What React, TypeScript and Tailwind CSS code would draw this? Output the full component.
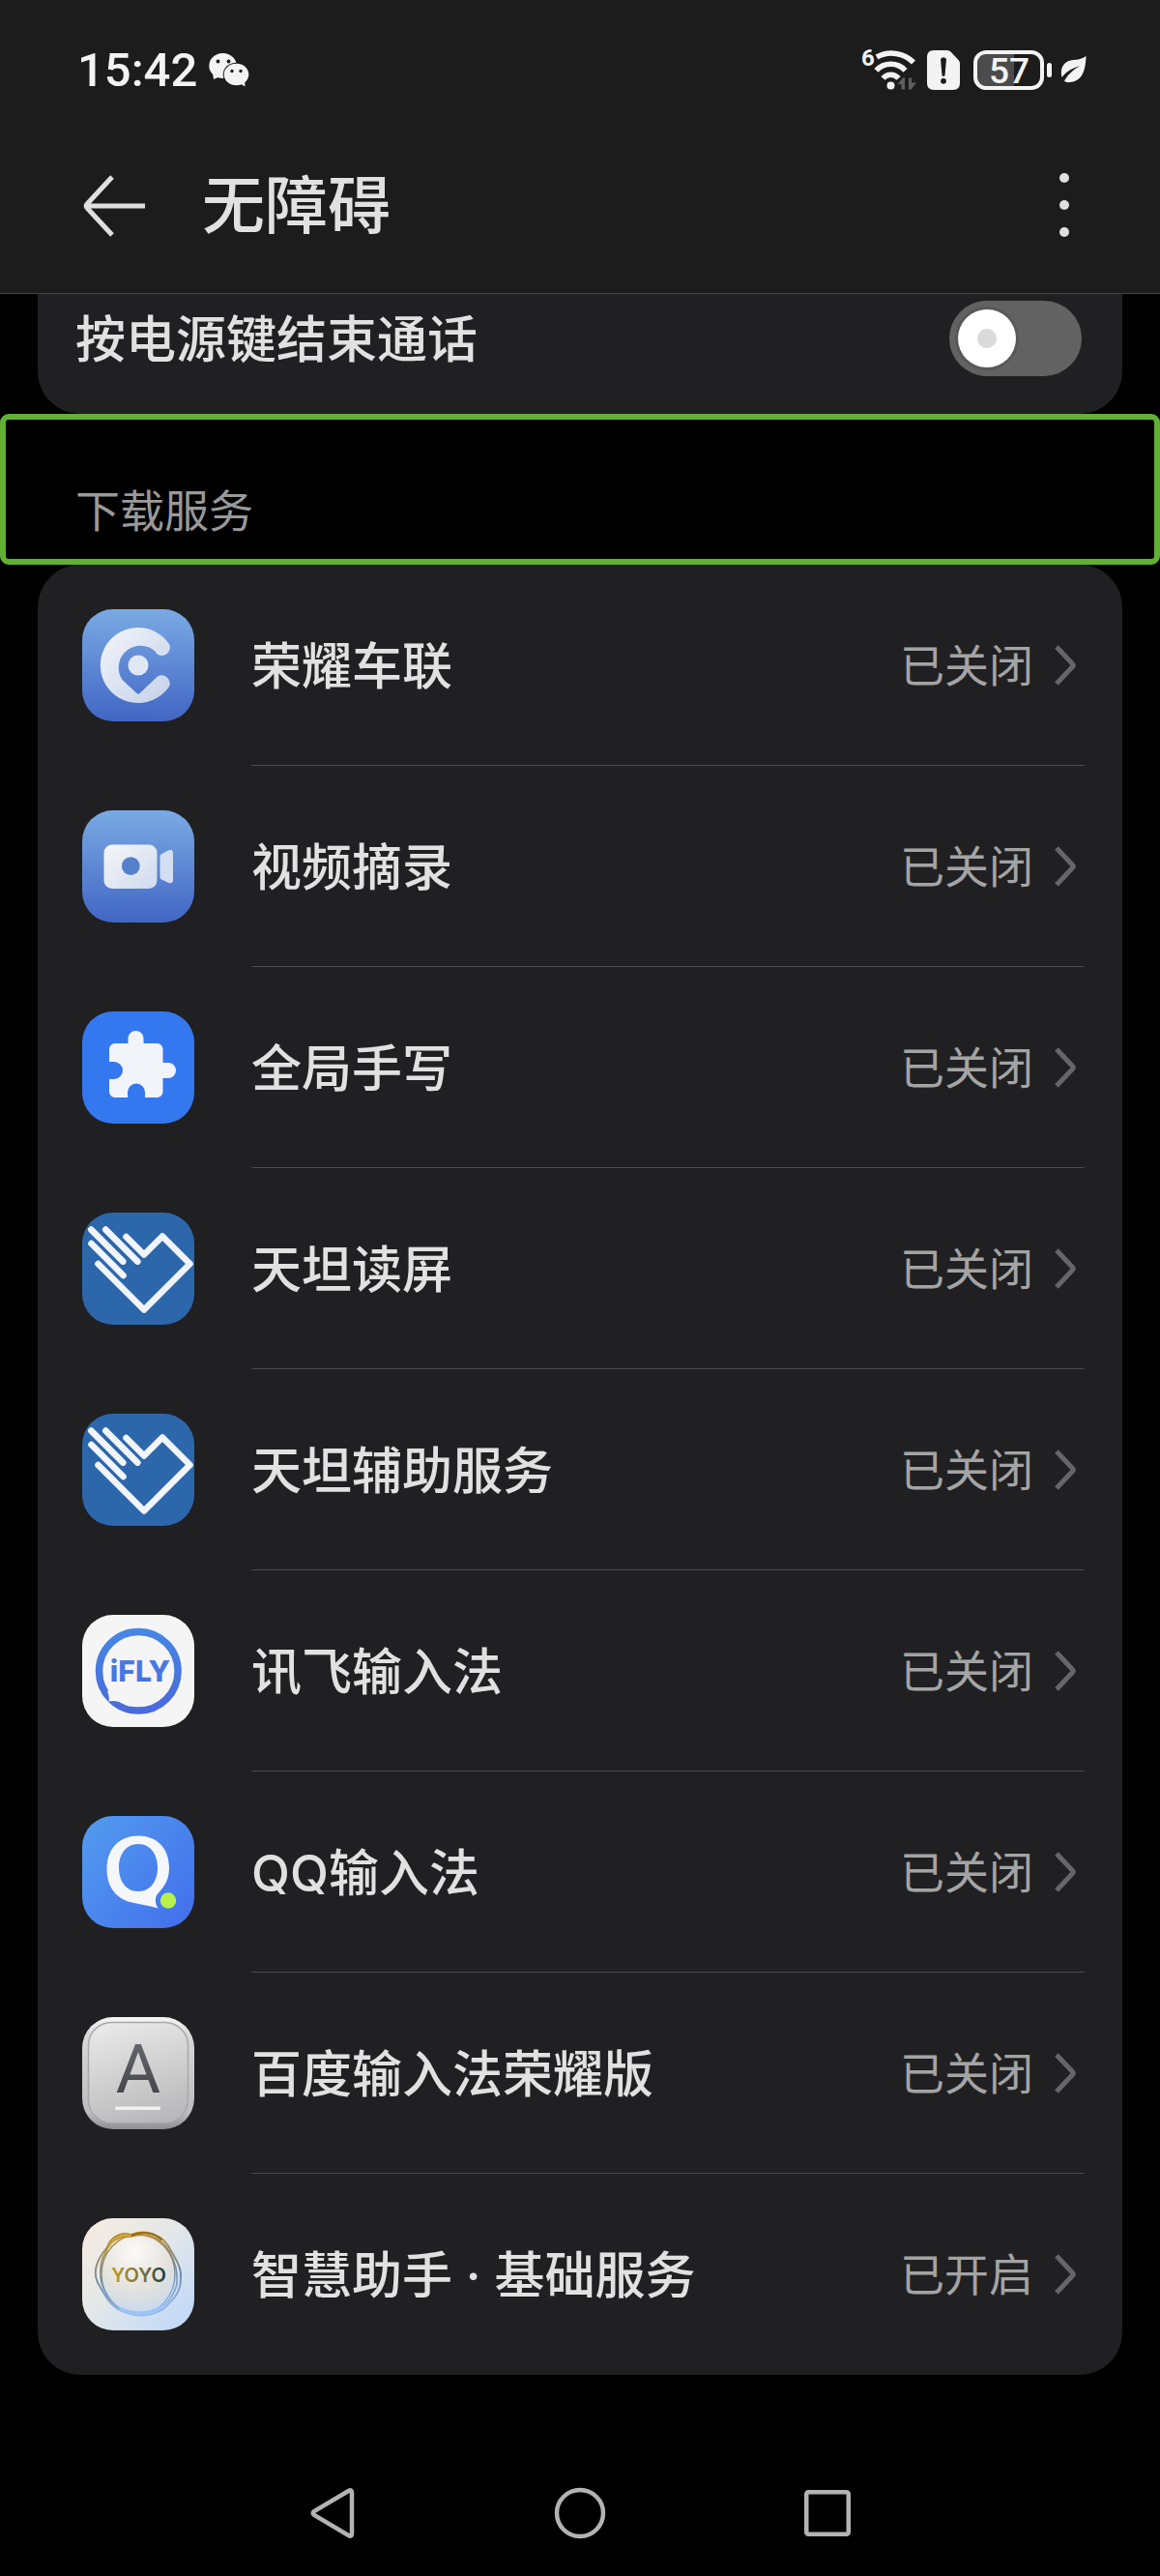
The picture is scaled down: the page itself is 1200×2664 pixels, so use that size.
import * as React from "react";

interface ServiceRowProps {
  name: string;
  status: string;
  Icon: React.ElementType;
  divider?: boolean;
}

const services = [
  { name: "荣耀车联", status: "已关闭", Icon: CarLinkIcon },
  { name: "视频摘录", status: "已关闭", Icon: VideoIcon },
  { name: "全局手写", status: "已关闭", Icon: PuzzleIcon },
  { name: "天\u5766读屏", status: "已关闭", Icon: HandHeartIcon },
  { name: "天\u5766辅助服务", status: "已关闭", Icon: HandHeartIcon },
  { name: "讯飞输入法", status: "已关闭", Icon: IflyIcon },
  { name: "QQ输入法", status: "已关闭", Icon: QqInputIcon },
  { name: "百度输入法荣耀版", status: "已关闭", Icon: BaiduInputIcon },
  { name: "智慧助手 · 基础服务", status: "已开启", Icon: YoyoIcon },
];

function AppIcon({ children }: { children: React.ReactNode }) {
  return (
    <svg
      viewBox="0 0 116 116"
      className="size-[116px] shrink-0 rounded-[32px]"
      aria-hidden="true"
    >
      {children}
    </svg>
  );
}

function CarLinkIcon() {
  return (
    <AppIcon>
      <defs>
        <linearGradient id="car-bg" x1="0" y1="0" x2="0" y2="1">
          <stop offset="0" stopColor="#7aaae4" />
          <stop offset="1" stopColor="#4166c4" />
        </linearGradient>
        <linearGradient id="car-fg" x1="0" y1="0" x2="1" y2="1">
          <stop offset="0" stopColor="#f4f6f9" />
          <stop offset="1" stopColor="#c3d0ea" />
        </linearGradient>
      </defs>
      <rect width="116" height="116" fill="url(#car-bg)" />
      <path
        d="M90 36A39 39 0 1 0 90 80A8.400 8.400 0 0 0 78 69.500L59.500 87Q58 88.500 56.500 87L41.500 73A22.700 22.700 0 0 1 75.500 43.500L77 46A8.400 8.400 0 0 0 90 36Z"
        fill="url(#car-fg)"
      />
      <circle cx="58" cy="58" r="10.500" fill="#e1e8f5" />
    </AppIcon>
  );
}

function VideoIcon() {
  return (
    <AppIcon>
      <defs>
        <linearGradient id="video-bg" x1="0" y1="0" x2="0" y2="1">
          <stop offset="0" stopColor="#7aaae4" />
          <stop offset="1" stopColor="#4166c4" />
        </linearGradient>
        <linearGradient id="video-fg" x1="0" y1="0" x2="1" y2="1">
          <stop offset="0" stopColor="#f5f6f8" />
          <stop offset="1" stopColor="#cfdaee" />
        </linearGradient>
      </defs>
      <rect width="116" height="116" fill="url(#video-bg)" />
      <rect x="22.500" y="35.500" width="55" height="45.500" rx="8.500" fill="url(#video-fg)" />
      <circle cx="50.300" cy="57.700" r="9.400" fill="#5480cc" />
      <path
        d="M80.500 47.500Q80.500 46 82 45.300L89.500 41.300Q94 40 94 44.500V72Q94 76 89.500 75L82 71.500Q80.500 70.500 80.500 69Z"
        fill="#d3dff1"
      />
    </AppIcon>
  );
}

function PuzzleIcon() {
  return (
    <AppIcon>
      <rect width="116" height="116" fill="#3478f0" />
      <path
        d="M34 33H47.500V28a8 8 0 0 1 16 0V33H77.500a6 6 0 0 1 6 6V53H89a8 8 0 0 1 0 16H83.500V83a6 6 0 0 1-6 6H65V83.500a9 9 0 0 0-18 0V89H34a6 6 0 0 1-6-6V70H33a9 9 0 0 0 0-18H28V39a6 6 0 0 1 6-6Z"
        fill="#f1f4f8"
      />
    </AppIcon>
  );
}

function HandHeartIcon() {
  return (
    <AppIcon>
      <rect width="116" height="116" fill="#2c67ac" />
      <path
        d="M45.500 25L64 43.500L83 24.500L111.500 53L64 100.500L16.500 53M9.300 17.600L42.300 50.600M24.300 17.600L57.300 50.600M9.500 32L42.500 65"
        fill="none"
        stroke="#f1f4f8"
        strokeWidth="6.600"
        strokeLinecap="round"
        strokeLinejoin="round"
      />
    </AppIcon>
  );
}

function IflyIcon() {
  return (
    <AppIcon>
      <defs>
        <linearGradient
          id="ifly"
          gradientUnits="userSpaceOnUse"
          x1="58"
          y1="14"
          x2="58"
          y2="102"
        >
          <stop offset="0" stopColor="#4587e4" />
          <stop offset="1" stopColor="#4a69dc" />
        </linearGradient>
      </defs>
      <rect width="116" height="116" fill="#f5f5f5" />
      <circle cx="58.300" cy="58.300" r="40.800" fill="none" stroke="url(#ifly)" strokeWidth="7.500" />
      <path
        d="M29 76L26 79.500Q28.500 84 27.500 89.500Q36 87.500 42 92Q46 94 50 95L54 80Z"
        fill="#f5f5f5"
      />
      <text
        x="60"
        y="69"
        textAnchor="middle"
        fontFamily="Inter"
        fontWeight="800"
        fontSize="30"
        fill="url(#ifly)"
      >
        iFLY
      </text>
    </AppIcon>
  );
}

function QqInputIcon() {
  return (
    <AppIcon>
      <defs>
        <linearGradient id="qq-bg" x1="0" y1="0.100" x2="1" y2="0.900">
          <stop offset="0" stopColor="#529aef" />
          <stop offset="1" stopColor="#4270ec" />
        </linearGradient>
      </defs>
      <rect width="116" height="116" fill="url(#qq-bg)" />
      <path
        fillRule="evenodd"
        d="M58 20.500C78 20.500 90 34 90 54C90 67 84 74 78.500 80C75 84 75 90 78.500 95.500C70 93 62 92 54 90C36 87 25.500 74 25.500 55C25.500 34 38 20.500 58 20.500ZM58 29C45 29 38 40 38 53.500C38 67 45 78 58 78C71 78 78 67 78 53.500C78 40 71 29 58 29Z"
        fill="#f5f6f8"
      />
      <circle cx="89" cy="87.500" r="8.200" fill="#b6f24b" />
    </AppIcon>
  );
}

function BaiduInputIcon() {
  return (
    <AppIcon>
      <defs>
        <linearGradient id="key-edge" x1="0" y1="0" x2="0" y2="1">
          <stop offset="0" stopColor="#f7f7f7" />
          <stop offset="0.150" stopColor="#d8d8d9" />
          <stop offset="0.850" stopColor="#bdbdbf" />
          <stop offset="1" stopColor="#8f8f92" />
        </linearGradient>
        <linearGradient id="key-face" x1="0.300" y1="0" x2="0.600" y2="1">
          <stop offset="0" stopColor="#e8e8e8" />
          <stop offset="1" stopColor="#b9b9bb" />
        </linearGradient>
        <linearGradient
          id="key-letter"
          gradientUnits="userSpaceOnUse"
          x1="0"
          y1="27"
          x2="0"
          y2="78"
        >
          <stop offset="0" stopColor="#67686d" />
          <stop offset="1" stopColor="#44464c" />
        </linearGradient>
      </defs>
      <rect width="116" height="116" fill="url(#key-edge)" />
      <rect
        x="6.500"
        y="5.500"
        width="103"
        height="104"
        rx="24"
        fill="url(#key-face)"
        stroke="#a9a9ab"
        strokeWidth="1.500"
      />
      <text
        x="58"
        y="78"
        textAnchor="middle"
        fontFamily="Roboto"
        fontWeight="400"
        fontSize="71"
        fill="url(#key-letter)"
      >
        A
      </text>
      <rect x="34" y="92.500" width="47" height="3.500" rx="1.500" fill="#f1f1f1" />
    </AppIcon>
  );
}

function YoyoIcon() {
  return (
    <AppIcon>
      <defs>
        <linearGradient id="yoyo-bg" x1="0" y1="0" x2="1" y2="1">
          <stop offset="0" stopColor="#f8ebe0" />
          <stop offset="0.450" stopColor="#e4e8e8" />
          <stop offset="1" stopColor="#bcd6fb" />
        </linearGradient>
        <linearGradient id="yoyo-ring" x1="0.400" y1="0" x2="0.550" y2="1">
          <stop offset="0" stopColor="#b98a1e" />
          <stop offset="0.300" stopColor="#8c8468" />
          <stop offset="0.600" stopColor="#6f8cae" />
          <stop offset="1" stopColor="#8fbaf0" />
        </linearGradient>
        <radialGradient id="yoyo-ball" cx="0.450" cy="0.200" r="0.900">
          <stop offset="0" stopColor="#fbfaf7" />
          <stop offset="0.550" stopColor="#e3e2dd" />
          <stop offset="1" stopColor="#c4d8f0" />
        </radialGradient>
        <linearGradient
          id="yoyo-text"
          gradientUnits="userSpaceOnUse"
          x1="30"
          y1="0"
          x2="87"
          y2="0"
        >
          <stop offset="0" stopColor="#c29a2a" />
          <stop offset="0.600" stopColor="#75703a" />
          <stop offset="1" stopColor="#153844" />
        </linearGradient>
      </defs>
      <rect width="116" height="116" fill="url(#yoyo-bg)" />
      <circle cx="57.500" cy="58" r="39" fill="url(#yoyo-ball)" />
      <g fill="none" stroke="url(#yoyo-ring)">
        <path
          d="M26 30C30 18 42 14 50 17C66 11 84 16 92 34C98 44 103 52 102 62C102 78 94 84 84 94C72 101 58 102 46 98C30 94 24 80 18 70C10 58 14 44 26 30Z"
          strokeWidth="1.800"
        />
        <path
          d="M24 36C28 24 38 18 50 19C68 14 82 20 90 34C97 46 99 58 98 68C94 84 82 96 66 99C46 100 32 92 24 76C16 62 18 46 24 36Z"
          strokeWidth="1.500"
        />
        <ellipse cx="58" cy="58" rx="38" ry="41" strokeWidth="1.300" />
      </g>
      <path d="M50 18C62 13 74 15 82 22" fill="none" stroke="#9a6a14" strokeWidth="2" strokeLinecap="round" />
      <path d="M28 29C32 20 42 16 50 18" fill="none" stroke="#d0a53c" strokeWidth="2" strokeLinecap="round" />
      <path d="M40 94C52 100 70 100 82 92" fill="none" stroke="#9cc4f6" strokeWidth="4" strokeLinecap="round" />
      <text
        x="58.500"
        y="66"
        textAnchor="middle"
        fontFamily="Inter"
        fontWeight="600"
        fontSize="20"
        fill="url(#yoyo-text)"
      >
        YOYO
      </text>
    </AppIcon>
  );
}

function WechatIcon() {
  return (
    <svg viewBox="0 0 42 36" className="h-9 w-[42px]" fill="#f3f3f3">
      <ellipse cx="14.500" cy="14" rx="14.200" ry="13" />
      <path d="M4 21L5 28L12 25Z" />
      <ellipse cx="28.500" cy="23" rx="13.800" ry="12.200" fill="#1c1c1c" />
      <ellipse cx="28.500" cy="23" rx="12.800" ry="11.200" />
      <path d="M32 32L37.500 35.500L37 29Z" />
      <circle cx="9.500" cy="9.500" r="1.900" fill="#1c1c1c" />
      <circle cx="20.500" cy="9.500" r="1.900" fill="#1c1c1c" />
      <circle cx="24" cy="19.500" r="1.700" fill="#1c1c1c" />
      <circle cx="33" cy="19.500" r="1.700" fill="#1c1c1c" />
    </svg>
  );
}

function WifiIcon() {
  return (
    <svg viewBox="0 0 58 44" className="h-11 w-[58px] overflow-visible" fill="#f3f3f3">
      <text x="0" y="18" fontFamily="Roboto" fontWeight="700" fontSize="24">
        6
      </text>
      <g fill="none" stroke="#f3f3f3" strokeWidth="5.600">
        <path d="M16 9A32 32 0 0 1 54 14.500" />
        <path d="M15.500 22.800A20.500 20.500 0 0 1 45.500 22.800" />
        <path d="M22.500 31A10.500 10.500 0 0 1 38.500 31" />
      </g>
      <circle cx="30.500" cy="38.500" r="4" />
      <path
        d="M37.500 37L43 30.500H45V42.500H41.500V37ZM49 30.500H52V35.500H57L51.500 42.500H49Z"
        fill="#5f5f5f"
      />
    </svg>
  );
}

function SimAlertIcon() {
  return (
    <svg viewBox="0 0 34 41" className="h-[41px] w-[34px]">
      <path
        d="M7 0H21Q23 0 24.500 1.500L32.500 10Q34 11.500 34 14V34Q34 41 27 41H7Q0 41 0 34V7Q0 0 7 0Z"
        fill="#f3f3f3"
      />
      <path d="M14 9Q17 5.500 20 9L18.500 26Q17 28 15.500 26Z" fill="#1c1c1c" />
      <circle cx="17" cy="31.800" r="2.900" fill="#1c1c1c" />
    </svg>
  );
}

function BatteryIcon() {
  return (
    <svg viewBox="0 0 82 41" className="h-[41px] w-[82px] overflow-visible">
      <path d="M12 2H42V39H12Q2 39 2 29V12Q2 2 12 2Z" fill="#4b4b4b" />
      <rect
        x="2"
        y="2"
        width="69"
        height="37"
        rx="11"
        fill="none"
        stroke="#f3f3f3"
        strokeWidth="4"
      />
      <rect x="76" y="13" width="5" height="15" rx="2.500" fill="#f3f3f3" />
      <text
        x="37"
        y="34"
        textAnchor="middle"
        fontFamily="Roboto"
        fontWeight="500"
        fontSize="37"
        fill="#f3f3f3"
      >
        57
      </text>
    </svg>
  );
}

function LeafIcon() {
  return (
    <svg viewBox="0 0 27 28" className="h-7 w-[27px]">
      <path
        d="M26.500 0C26 16 22 26 10 27Q6 27.500 4 26C7 20 12 15 20 10C11 13 5 17 1.500 22C-1 12 4 5 13 4Q21 4 26.500 0Z"
        fill="#f3f3f3"
      />
    </svg>
  );
}

function StatusBar() {
  return (
    <div className="flex h-36 items-center justify-between pr-[76px] pl-20">
      <div className="flex items-center gap-3">
        <span className="font-[Roboto] text-[49px] leading-none font-medium text-[#f3f3f3]">
          15:42
        </span>
        <WechatIcon />
      </div>
      <div className="flex items-center">
        <WifiIcon />
        <div className="ml-[10px] flex items-center gap-[14px]">
          <SimAlertIcon />
          <div className="flex items-center gap-2">
            <BatteryIcon />
            <LeafIcon />
          </div>
        </div>
      </div>
    </div>
  );
}

function TitleBar() {
  return (
    <div className="flex h-[138px] items-center px-[86px]">
      <button type="button" aria-label="返回">
        <svg viewBox="0 0 64 64" className="size-16" fill="none" stroke="#dfdfdf" strokeWidth="5">
          <path d="M64 32H3M30 2L4.500 29.500Q2 32 4.500 34.500L30 62" />
        </svg>
      </button>
      <h1 className="ml-[59px] flex-1 text-[65px] leading-[80px] font-medium">无障碍</h1>
      <button type="button" aria-label="更多" className="px-2">
        <svg viewBox="0 0 10 68" className="h-[68px] w-[10px]" fill="#dfdfdf">
          <circle cx="5" cy="5" r="5" />
          <circle cx="5" cy="33" r="5" />
          <circle cx="5" cy="61" r="5" />
        </svg>
      </button>
    </div>
  );
}

function PowerKeySetting() {
  const [checked, setChecked] = React.useState(false);

  return (
    <div className="mx-[39px] rounded-b-[44px] bg-[#202022] pb-8">
      <div className="flex h-[92px] items-center justify-between pr-[42px] pl-[39px]">
        <label htmlFor="power-key" className="pt-1 text-[52px] leading-[64px] font-medium">
          按电源键结束通话
        </label>
        <div className="relative h-[78px] w-[137px]">
          <input
            id="power-key"
            type="checkbox"
            role="switch"
            checked={checked}
            onChange={(e) => setChecked(e.target.checked)}
            className="peer block size-full appearance-none rounded-full bg-[#626262] checked:bg-[#3478f0]"
          />
          <span className="pointer-events-none absolute top-[9px] left-[9px] flex size-[60px] items-center justify-center rounded-full bg-white ring-3 ring-black/10 peer-checked:right-[9px] peer-checked:left-auto">
            <span className="size-5 rounded-full bg-[#dadada]" />
          </span>
        </div>
      </div>
    </div>
  );
}

function ServiceRow({ name, status, Icon, divider = true }: ServiceRowProps) {
  return (
    <li>
      <a href="#" className="flex items-center gap-[59px] pr-[39px] pl-[46px]">
        <Icon />
        <div
          className={`flex h-52 flex-1 items-center border-b pr-[9px] ${
            divider ? "border-[#4b4b4d]" : "border-transparent"
          }`}
        >
          <span className="flex-1 pt-1 text-[52px] leading-[64px] font-medium">{name}</span>
          <span className="mr-[22px] text-[46px] leading-[64px] text-[#a4a4a5]">{status}</span>
          <svg
            viewBox="0 0 22 42"
            className="h-[42px] w-[22px]"
            fill="none"
            stroke="#666668"
            strokeWidth="5"
          >
            <path d="M2 2L18.500 19.500Q20 21 18.500 22.500L2 40" />
          </svg>
        </div>
      </a>
    </li>
  );
}

function NavBar() {
  return (
    <nav className="mt-auto flex h-[130px] items-center justify-center">
      <button type="button" aria-label="返回" className="flex w-64 justify-center">
        <svg viewBox="0 0 46 54" className="h-[54px] w-[46px]" fill="none" stroke="#b3b3b3" strokeWidth="4.500">
          <path d="M39.500 4Q43 2 43 6V48Q43 52 39.500 50L4 29Q1.500 27 4 25Z" />
        </svg>
      </button>
      <button type="button" aria-label="主页" className="flex w-64 justify-center">
        <svg viewBox="0 0 54 54" className="size-[54px]" fill="none" stroke="#b3b3b3" strokeWidth="4.500">
          <circle cx="27" cy="27" r="24" />
        </svg>
      </button>
      <button type="button" aria-label="最近任务" className="flex w-64 justify-center">
        <svg viewBox="0 0 48 48" className="size-12" fill="none" stroke="#b3b3b3" strokeWidth="4.500">
          <rect x="2.250" y="2.250" width="43.500" height="43.500" rx="2" />
        </svg>
      </button>
    </nav>
  );
}

export default function App() {
  return (
    <div className="flex min-h-screen flex-col bg-black font-[Inter,'Noto_Sans_CJK_SC',sans-serif] text-[#e1e1e1]">
      <header className="border-b border-[#444445] bg-[#1c1c1c] pb-[21px]">
        <StatusBar />
        <TitleBar />
      </header>
      <main>
        <PowerKeySetting />
        <div className="flex h-[156px] items-end rounded-[9px] border-6 border-[#62b135] pb-[18px] pl-[72px]">
          <h2 className="text-[46px] leading-[64px] text-[#999999]">下载服务</h2>
        </div>
        <ul className="mx-[39px] rounded-[44px] bg-[#202022]">
          {services.map((service, i) => (
            <ServiceRow
              key={service.name}
              {...service}
              divider={i < services.length - 1}
            />
          ))}
        </ul>
      </main>
      <NavBar />
    </div>
  );
}
